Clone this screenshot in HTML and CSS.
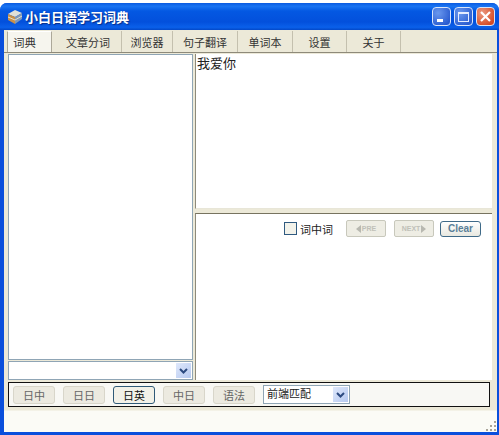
FILE: index.html
```html
<!DOCTYPE html>
<html lang="zh">
<head>
    <meta charset="UTF-8">
    <title>小白日语学习词典</title>
    <link rel="stylesheet" href="styles.css">
</head>
<body>
    <div class="window">
        <div class="titlebar">
            <svg class="app-icon" width="14" height="14" viewBox="0 0 14 14">
                <path d="M0 4 L7 0 L14 3 L7 7 Z" fill="#e0e0d8"/>
                <path d="M0 4 L7 7 V14 L0 10 Z" fill="#c89048"/>
                <path d="M7 7 L14 3 V9 L7 14 Z" fill="#7f98b8"/>
                <path d="M0 7 L7 10 L14 6" fill="none" stroke="#e8e0c8" stroke-width="1"/>
            </svg>
            <span class="title">小白日语学习词典</span>
            <div class="win-buttons">
                <div class="win-btn"><span class="icon-min"></span></div>
                <div class="win-btn"><span class="icon-max"></span></div>
                <div class="win-btn close">
                    <svg width="13" height="13" viewBox="0 0 13 13"><path d="M2 2 L11 11 M11 2 L2 11" stroke="#fff" stroke-width="2.2"/></svg>
                </div>
            </div>
        </div>
        <div class="client">
            <div class="tabs">
                <div class="tab active">词典</div>
                <div class="tab">文章分词</div>
                <div class="tab">浏览器</div>
                <div class="tab">句子翻译</div>
                <div class="tab">单词本</div>
                <div class="tab">设置</div>
                <div class="tab">关于</div>
            </div>
            <div class="main">
                <div class="left">
                    <div class="word-list"></div>
                    <div class="combo">
                        <div class="combo-text"></div>
                        <div class="combo-arrow"><svg width="9" height="6" viewBox="0 0 9 6"><path d="M1 1 L4.5 4.5 L8 1" fill="none" stroke="#2c4a80" stroke-width="2"/></svg></div>
                    </div>
                </div>
                <div class="right">
                    <div class="input-pane">我爱你</div>
                    <div class="result-pane">
                        <div class="result-tools">
                            <span class="check"></span>
                            <span class="check-label">词中词</span>
                            <button class="nav-btn pre"><span class="tri-l"></span>PRE</button>
                            <button class="nav-btn next">NEXT<span class="tri-r"></span></button>
                            <button class="clear-btn">Clear</button>
                        </div>
                    </div>
                </div>
            </div>
            <div class="toolbar">
                <button class="dict-btn">日中</button>
                <button class="dict-btn">日日</button>
                <button class="dict-btn selected">日英</button>
                <button class="dict-btn">中日</button>
                <button class="dict-btn">语法</button>
                <div class="combo match">
                    <div class="combo-text">前端匹配</div>
                    <div class="combo-arrow"><svg width="9" height="6" viewBox="0 0 9 6"><path d="M1 1 L4.5 4.5 L8 1" fill="none" stroke="#2c4a80" stroke-width="2"/></svg></div>
                </div>
            </div>
            <div class="statusbar">
                <svg class="grip" width="12" height="12" viewBox="0 0 12 12" fill="#a8a498">
                    <rect x="9" y="1" width="2" height="2"/>
                    <rect x="5" y="5" width="2" height="2"/><rect x="9" y="5" width="2" height="2"/>
                    <rect x="1" y="9" width="2" height="2"/><rect x="5" y="9" width="2" height="2"/><rect x="9" y="9" width="2" height="2"/>
                </svg>
            </div>
        </div>
    </div>
</body>
</html>
```

FILE: styles.css
```css
html, body {
    margin: 0;
    height: 100%;
    background: #fff;
    overflow: hidden;
}
body {
    padding-top: 3px;
    box-sizing: border-box;
    font-family: "Liberation Sans", "Noto Sans CJK SC", sans-serif;
    font-size: 11px;
    color: #222;
}
.window {
    height: 432px;
    display: flex;
    flex-direction: column;
    background: #0a4fdc;
    border-radius: 7px 7px 0 0;
    padding: 0 2px 3px 4px;
    box-sizing: border-box;
}
.titlebar {
    height: 27px;
    flex: none;
    margin: 0 -2px 0 -4px;
    padding: 0 4px 0 8px;
    display: flex;
    align-items: center;
    border-radius: 7px 7px 0 0;
    background: linear-gradient(180deg, #0a5ae0 0%, #1a74f2 12%, #0458e2 30%, #0350dc 70%, #0a60ea 90%, #0348c8 100%);
}
.app-icon {
    margin-right: 3px;
}
.title {
    color: #fff;
    font-weight: bold;
    font-size: 13px;
    text-shadow: 1px 1px 1px #0a2f88;
    flex: 1;
}
.win-buttons {
    display: flex;
    gap: 3px;
}
.win-btn {
    width: 19px;
    height: 19px;
    box-sizing: border-box;
    border: 1px solid #d8e4fa;
    border-radius: 4px;
    background: radial-gradient(circle at 30% 30%, #6a98ee, #2a5cd0 80%);
    position: relative;
    display: flex;
    align-items: center;
    justify-content: center;
}
.win-btn.close {
    background: radial-gradient(circle at 30% 30%, #ec9a80, #d44a24 80%);
}
.icon-min {
    width: 6px;
    height: 3px;
    background: #fff;
    position: absolute;
    left: 4px;
    bottom: 3px;
}
.icon-max {
    width: 11px;
    height: 10px;
    border: 1px solid #e4ecff;
    border-top-width: 2px;
    box-sizing: border-box;
}
.client {
    flex: 1;
    display: flex;
    flex-direction: column;
    background: #ece9d8;
    min-height: 0;
}
.tabs {
    height: 22px;
    flex: none;
    display: grid;
    grid-template-columns: 48px 67px 51px 65px 55px 54px 54px;
    padding-left: 3px;
    box-sizing: border-box;
    padding-top: 1px;
}
.tab {
    border-right: 1px solid #c4c0ae;
    display: flex;
    align-items: center;
    justify-content: center;
    color: #333;
}
.tab.active {
    background: #f6f5ee;
    border-left: 1px solid #aca899;
    border-top: 1px solid #fff;
    border-right: 1px solid #aca899;
    box-sizing: border-box;
    margin-right: 3px;
    justify-content: flex-start;
    padding-left: 5px;
    font-size: 11.5px;
}
.main {
    height: 328px;
    flex: none;
    display: flex;
    gap: 2px;
    padding: 0 5px 0 4px;
    border-top: 1px solid #8e8a7a;
    box-sizing: border-box;
}
.left {
    width: 185px;
    flex: none;
    display: flex;
    flex-direction: column;
    gap: 1px;
    padding-top: 1px;
}
.word-list {
    flex: 1;
    background: #fff;
    border: 1px solid #8fa5b5;
}
.combo {
    height: 19px;
    display: flex;
    background: #fff;
    border: 1px solid #8fa5b5;
    box-sizing: border-box;
    padding: 1px;
}
.combo-text {
    flex: 1;
    padding-left: 3px;
    line-height: 15px;
}
.combo-arrow {
    width: 15px;
    background: linear-gradient(135deg, #dfe8fb, #b6c9f0);
    display: flex;
    align-items: center;
    justify-content: center;
}
.right {
    flex: 1;
    display: flex;
    flex-direction: column;
    padding-top: 1px;
    min-width: 0;
}
.input-pane {
    height: 153px;
    background: #fff;
    border-left: 1px solid #8e8a7a;
    border-bottom: 1px solid #e8e6d8;
    padding: 1px 0 0 1px;
    font-size: 13px;
    line-height: 18px;
}
.result-pane {
    flex: 1;
    margin-top: 4px;
    background: #fff;
    border-top: 1px solid #77735f;
    border-left: 1px solid #8e8a7a;
}
.result-tools {
    display: flex;
    align-items: center;
    justify-content: flex-end;
    padding: 6px 11px 0 0;
}
.check {
    width: 11px;
    height: 11px;
    border: 1px solid #2f5a80;
    background: #f2f2ea;
    margin-right: 3px;
}
.check-label {
    margin-right: 13px;
}
.nav-btn {
    width: 40px;
    height: 17px;
    margin: 0 8px 0 0;
    padding: 0;
    background: #eeede4;
    border: 1px solid #c8c8bc;
    border-radius: 2px;
    font: bold 7px "Liberation Sans", sans-serif;
    color: #c0c0b8;
    display: flex;
    align-items: center;
    justify-content: center;
    gap: 1px;
}
.tri-l {
    border: 4px solid transparent;
    border-left: 0;
    border-right: 5px solid #b8b8b0;
}
.tri-r {
    border: 4px solid transparent;
    border-right: 0;
    border-left: 5px solid #b8b8b0;
}
.next {
    margin-right: 6px;
}
.clear-btn {
    width: 41px;
    height: 16px;
    padding: 0;
    background: linear-gradient(180deg, #fff, #e8e8e0);
    border: 1px solid #3f6a88;
    border-radius: 3px;
    font: bold 10px "Liberation Sans", sans-serif;
    color: #5a7f98;
}
.toolbar {
    height: 25px;
    flex: none;
    margin: 2px 7px 0 4px;
    display: flex;
    align-items: center;
    gap: 8px;
    padding-left: 4px;
    background: #f8f8f4;
    border: 1px solid #111;
    box-sizing: border-box;
}
.dict-btn {
    width: 42px;
    height: 18px;
    padding: 0;
    background: #eceae0;
    border: 1px solid #d8d6ca;
    border-radius: 3px;
    font: 11px "Liberation Sans", "Noto Sans CJK SC", sans-serif;
    color: #666;
}
.dict-btn.selected {
    background: #f2f1e8;
    border-color: #2f5a78;
    color: #111;
}
.combo.match {
    width: 87px;
    height: 19px;
}
.combo.match .combo-text {
    padding-left: 2px;
}
.statusbar {
    flex: 1;
    background: linear-gradient(180deg, #ece9d8 0, #ece9d8 3px, #fbfbf6 4px);
    position: relative;
}
.grip {
    position: absolute;
    right: 0;
    bottom: 0;
}
```
